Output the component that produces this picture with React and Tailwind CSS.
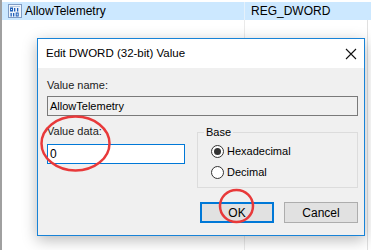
import React from "react";

function RegIcon() {
  return (
    <svg width="14" height="14" viewBox="0 0 14 14" className="shrink-0">
      <rect x="0.5" y="0.5" width="13" height="13" fill="#eef4fb" stroke="#7f9cc4" />
      <rect x="2" y="2" width="10" height="1" fill="#b7c9de" />
      <rect x="2.5" y="4" width="2" height="3" fill="none" stroke="#1f5fb8" strokeWidth="1" />
      <rect x="6" y="4" width="1.3" height="3.5" fill="#1f5fb8" />
      <rect x="9" y="4" width="1.3" height="3.5" fill="#1f5fb8" />
      <rect x="2.5" y="9" width="1.3" height="3.5" fill="#1f5fb8" />
      <rect x="5" y="9" width="1.3" height="3.5" fill="#1f5fb8" />
      <rect x="8.2" y="9" width="2" height="3" fill="none" stroke="#1f5fb8" strokeWidth="1" />
    </svg>
  );
}

function Radio({ checked, label }) {
  return (
    <div className="flex h-[21px] items-center gap-[3px]">
      <span className="flex h-[13px] w-[13px] shrink-0 items-center justify-center rounded-full border border-[#333] bg-white">
        {checked && <span className="h-[7px] w-[7px] rounded-full bg-[#333]" />}
      </span>
      <span>{label}</span>
    </div>
  );
}

export default function App() {
  return (
    <div
      className="relative h-[250px] w-[371px] overflow-hidden bg-white text-[11px] text-black"
      style={{ fontFamily: '"Liberation Sans", Arial, sans-serif' }}
    >
      {/* registry list behind the dialog */}
      <div className="flex h-full">
        <div className="w-[2px] bg-[#a0a0a0]" />
        <div className="flex-1">
          <div className="mt-[2px] flex h-[18px] items-center bg-[#cce8ff]">
            <div className="flex w-[243px] items-center gap-[3px] border-r border-[#e5f1fb] pl-[6px]">
              <RegIcon />
              <span className="text-[12px]">AllowTelemetry</span>
            </div>
            <span className="pl-[6px] text-[12px]">REG_DWORD</span>
          </div>
          <div className="flex h-[230px]">
            <div className="w-[243px] border-r border-[#eaeaea]" />
            <div className="flex-1" />
            <div className="w-[4px] border-l border-[#e0e0e0]" />
          </div>
        </div>
      </div>

      {/* dialog window */}
      <div className="absolute left-[37px] top-[38px] flex h-[198px] w-[328px] flex-col border border-[#1883d7] bg-[#f0f0f0] shadow-[0_4px_14px_rgba(0,0,0,0.28)]">
        <div className="flex h-[29px] items-center justify-between bg-white pl-[8px] pr-[7px]">
          <span className="text-[11.5px]">Edit DWORD (32-bit) Value</span>
          <svg width="12" height="12" viewBox="0 0 12 12">
            <path d="M1 1 L11 11 M11 1 L1 11" stroke="#111" strokeWidth="1.1" />
          </svg>
        </div>
        <div className="flex flex-col pl-[9px] pr-[6px] pt-[9px]">
          <span className="leading-[16px] text-[#222]">Value name:</span>
          <div className="mt-[3px] flex h-[20px] items-center border border-[#7a7a7a] bg-[#f0f0f0] pl-[2px]">
            AllowTelemetry
          </div>
          <div className="mt-[7px] flex gap-[12px]">
            <div className="flex w-[138px] shrink-0 flex-col">
              <span className="leading-[16px] text-[#222]">Value data:</span>
              <div className="mt-[5px] flex h-[20px] items-center border border-[#0078d7] bg-white pl-[2px] text-[12px]">
                0
              </div>
            </div>
            <div className="relative mt-[9px] h-[56px] flex-1 border border-[#dcdcdc]">
              <span className="absolute left-[6px] top-[-9px] bg-[#f0f0f0] px-[2px] leading-[16px]">Base</span>
              <div className="flex flex-col pl-[13px] pt-[8px]">
                <Radio checked label="Hexadecimal" />
                <Radio label="Decimal" />
              </div>
            </div>
          </div>
          <div className="mt-[14px] flex justify-end gap-[10px] text-[12px]">
            <button className="h-[21px] w-[74px] shrink-0 border-2 border-[#0078d7] bg-[#e1e1e1]">OK</button>
            <button className="h-[21px] w-[74px] shrink-0 border border-[#adadad] bg-[#e1e1e1]">Cancel</button>
          </div>
        </div>
      </div>

      {/* red annotation circles */}
      <svg className="pointer-events-none absolute left-0 top-0" width="371" height="250">
        <ellipse cx="75.5" cy="143.5" rx="34" ry="27" fill="none" stroke="#e8393a" strokeWidth="2.5" />
        <ellipse cx="236.5" cy="206" rx="16.5" ry="16" fill="none" stroke="#e8393a" strokeWidth="2.5" />
      </svg>
    </div>
  );
}
